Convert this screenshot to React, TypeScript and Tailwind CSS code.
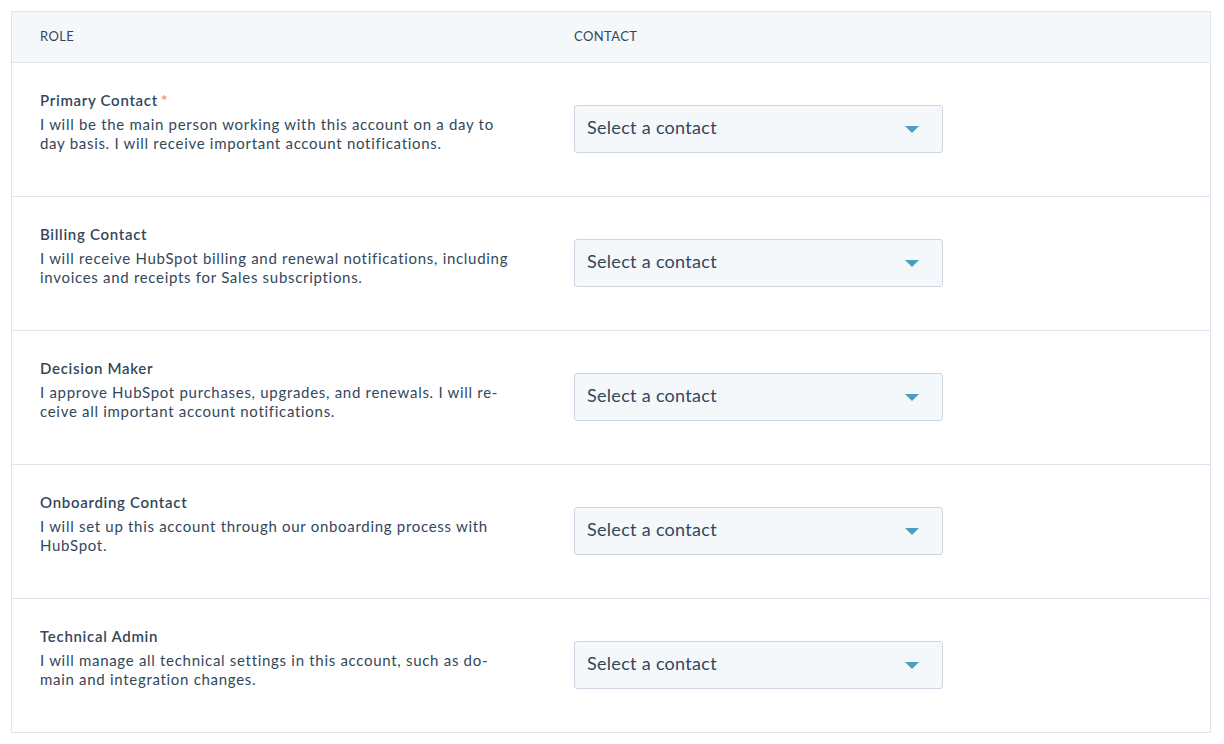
const roles = [
  {
    title: 'Primary Contact',
    required: true,
    lines: ['I will be the main person working with this account on a day to', 'day basis. I will receive important account notifications.'],
  },
  {
    title: 'Billing Contact',
    lines: ['I will receive HubSpot billing and renewal notifications, including', 'invoices and receipts for Sales subscriptions.'],
  },
  {
    title: 'Decision Maker',
    lines: ['I approve HubSpot purchases, upgrades, and renewals. I will re-', 'ceive all important account notifications.'],
  },
  {
    title: 'Onboarding Contact',
    lines: ['I will set up this account through our onboarding process with', 'HubSpot.'],
  },
  {
    title: 'Technical Admin',
    lines: ['I will manage all technical settings in this account, such as do-', 'main and integration changes.'],
  },
]

function ContactSelect() {
  return (
    <button className="mt-[14px] flex h-[48px] w-[369px] items-center justify-between rounded-[3px] border border-[#cbd6e2] bg-[#f5f8fa] pl-[12px] pr-[23px] text-left text-[18px] tracking-[0.3px] text-[#33475b]">
      <span className="pb-[3px]">Select a contact</span>
      <svg width="14" height="7" viewBox="0 0 14 7" className="mt-[1px]">
        <path d="M0 0 L14 0 L7 7 Z" fill="#4a9fbd" />
      </svg>
    </button>
  )
}

export default function App() {
  return (
    <div className="min-h-screen bg-white p-[11px] font-['Lato','Noto_Sans',sans-serif] text-[#33475b]">
      <div className="w-[1200px] border border-[#dfe3eb]">
        <div className="flex h-[51px] items-center border-b border-[#dfe3eb] bg-[#f5f8fa] text-[13px] tracking-[0.4px] uppercase">
          <div className="w-[562px] pl-[28px]">Role</div>
          <div>Contact</div>
        </div>
        {roles.map((role, i) => (
          <div
            key={role.title}
            className={`flex items-start pt-[28px] ${i < roles.length - 1 ? 'h-[134px] border-b border-[#dfe3eb]' : 'h-[133px]'}`}
          >
            <div className="w-[562px] pl-[28px] text-[15px] leading-[19px] tracking-[0.7px]">
              <div className="mb-[5px] font-semibold">
                {role.title}
                {role.required && <span className="ml-[3px] font-bold text-[#f5955e]">*</span>}
              </div>
              {role.lines.map((line) => (
                <div key={line}>{line}</div>
              ))}
            </div>
            <ContactSelect />
          </div>
        ))}
      </div>
    </div>
  )
}
